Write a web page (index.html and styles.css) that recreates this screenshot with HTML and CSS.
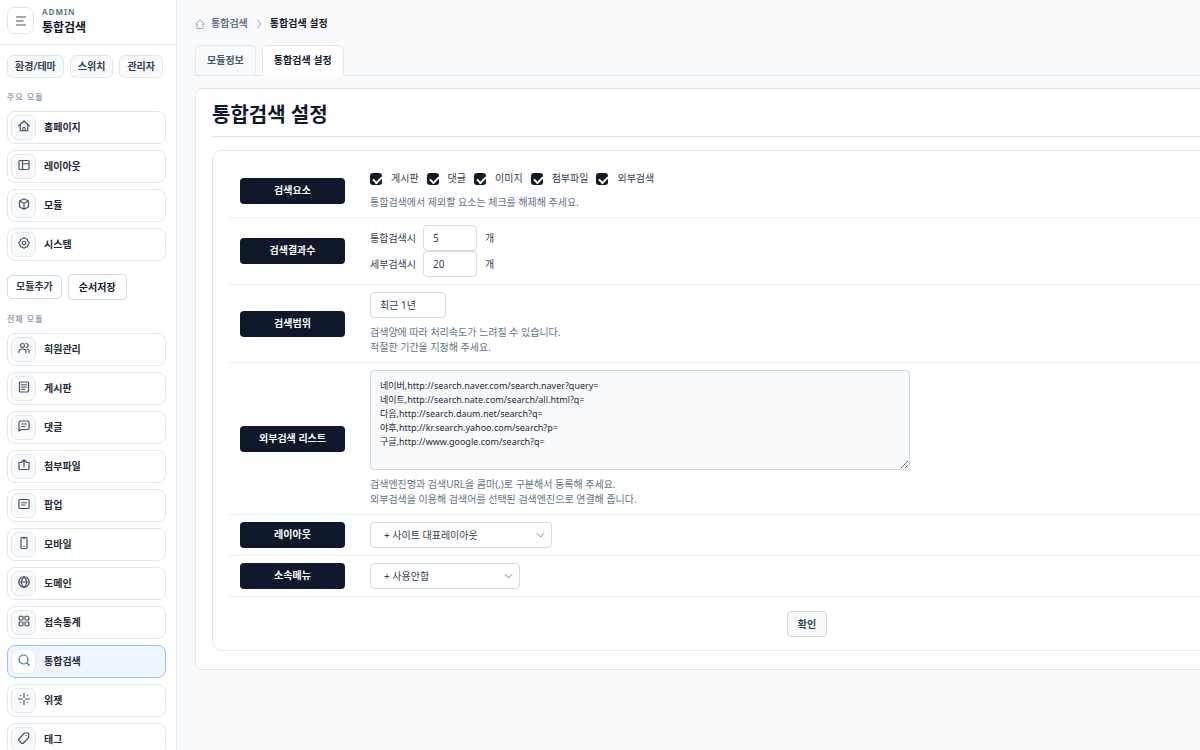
FILE: index.html
```html
<!-- index.html -->
<!DOCTYPE html>
<html lang="ko">

<head>
    <meta charset="UTF-8">
    <meta name="viewport" content="width=device-width, initial-scale=1.0">
    <title>통합검색 설정</title>
    <link rel="stylesheet" href="styles.css">
</head>

<body>
    <aside class="sidebar">
        <div class="sidebar-header">
            <button type="button" class="menu-toggle" aria-label="메뉴">
                <svg class="icon" viewBox="0 0 24 24"><path d="M3 4h18M3 12h13M3 20h18" /></svg>
            </button>
            <div>
                <div class="brand-sub">ADMIN</div>
                <div class="brand-title">통합검색</div>
            </div>
        </div>

        <div class="quick-links">
            <a href="#">환경/테마</a>
            <a href="#">스위치</a>
            <a href="#">관리자</a>
        </div>

        <h2 class="menu-label">주요 모듈</h2>
        <nav class="menu">
            <a href="#" class="menu-item">
                <span class="menu-icon"><svg class="icon" viewBox="0 0 24 24"><path d="M1.500 11.500L12 2l10.500 9.500M4.500 9v12.500h15V9M9.500 21.500V17a2.500 2.500 0 0 1 5 0v4.500" /></svg></span>
                홈페이지
            </a>
            <a href="#" class="menu-item">
                <span class="menu-icon"><svg class="icon" viewBox="0 0 24 24"><rect x="2" y="3" width="20" height="18" rx="2" /><path d="M9 3v18M9 9.500h13" /></svg></span>
                레이아웃
            </a>
            <a href="#" class="menu-item">
                <span class="menu-icon"><svg class="icon" viewBox="0 0 24 24"><path d="M12 1.500l9 4.500v12l-9 4.500L3 18V6zM3 6l9 4.500L21 6M12 10.500v12" /></svg></span>
                모듈
            </a>
            <a href="#" class="menu-item">
                <span class="menu-icon"><svg class="icon" viewBox="0 0 24 24"><circle cx="12" cy="12" r="3.500" /><path d="M9 3.500l3-2 3 2 3.500.5 1 3.500 3 4.500-3 4.500-1 3.500-3.500.5-3 2-3-2-3.500-.5-1-3.500-3-4.500 3-4.500 1-3.500z" /></svg></span>
                시스템
            </a>
        </nav>

        <div class="menu-actions">
            <a href="#" class="btn-add">모듈추가</a>
            <button type="button" class="btn-order">순서저장</button>
        </div>

        <h2 class="menu-label">전체 모듈</h2>
        <nav class="menu">
            <a href="#" class="menu-item">
                <span class="menu-icon"><svg class="icon" viewBox="0 0 24 24"><circle cx="9" cy="7" r="4" /><path d="M2 21v-2a5 5 0 0 1 5-5h4a5 5 0 0 1 5 5v2M16 3a4 4 0 0 1 0 8M18.500 14a5 5 0 0 1 4 5v2" /></svg></span>
                회원관리
            </a>
            <a href="#" class="menu-item">
                <span class="menu-icon"><svg class="icon" viewBox="0 0 24 24"><rect x="3" y="2" width="18" height="20" rx="2" /><path d="M7 7.500h10M7 12h10M7 16.500h7" /></svg></span>
                게시판
            </a>
            <a href="#" class="menu-item">
                <span class="menu-icon"><svg class="icon" viewBox="0 0 24 24"><path d="M2 22V5a3 3 0 0 1 3-3h15a2 2 0 0 1 2 2v12a3 3 0 0 1-3 3H6zM7 8h10M7 13h7" /></svg></span>
                댓글
            </a>
            <a href="#" class="menu-item">
                <span class="menu-icon"><svg class="icon" viewBox="0 0 24 24"><path d="M7 7H2v12a2 2 0 0 0 2 2h16a2 2 0 0 0 2-2V7h-5M12 16V2M7.500 6L12 1.500 16.500 6" /></svg></span>
                첨부파일
            </a>
            <a href="#" class="menu-item">
                <span class="menu-icon"><svg class="icon" viewBox="0 0 24 24"><rect x="2" y="3" width="20" height="18" rx="2" /><path d="M7 9.500h10M7 14h7" /></svg></span>
                팝업
            </a>
            <a href="#" class="menu-item">
                <span class="menu-icon"><svg class="icon" viewBox="0 0 24 24"><rect x="6" y="1" width="12" height="22" rx="2" /><path d="M10.500 3.500h3M11.500 19h1" /></svg></span>
                모바일
            </a>
            <a href="#" class="menu-item">
                <span class="menu-icon"><svg class="icon" viewBox="0 0 24 24"><circle cx="12" cy="12" r="10.500" /><path d="M1.500 12h21M12 1.500c7 6 7 15 0 21M12 1.500c-7 6-7 15 0 21" /></svg></span>
                도메인
            </a>
            <a href="#" class="menu-item">
                <span class="menu-icon"><svg class="icon" viewBox="0 0 24 24"><rect x="2.500" y="2.500" width="7.500" height="7.500" rx="1" /><rect x="14" y="2.500" width="7.500" height="7.500" rx="1" /><rect x="2.500" y="14" width="7.500" height="7.500" rx="1" /><rect x="14" y="14" width="7.500" height="7.500" rx="1" /></svg></span>
                접속통계
            </a>
            <a href="#" class="menu-item active">
                <span class="menu-icon"><svg class="icon" viewBox="0 0 24 24"><circle cx="11" cy="11" r="9" /><path d="M17.500 17.500l5 5" /></svg></span>
                통합검색
            </a>
            <a href="#" class="menu-item">
                <span class="menu-icon"><svg class="icon" viewBox="0 0 24 24"><path d="M12 0v9M12 15v9M0 12h9M15 12h9M5 5h.5M18.500 5h.5M5 19h.5M18.500 19h.5" /></svg></span>
                위젯
            </a>
            <a href="#" class="menu-item">
                <span class="menu-icon"><svg class="icon" viewBox="0 0 24 24"><path d="M13 2h6.500a2 2 0 0 1 2 2v7L10.500 22.500a2 2 0 0 1-3 0L2 17a2 2 0 0 1 0-3zM16.500 7h.5" /></svg></span>
                태그
            </a>
        </nav>
    </aside>

    <main class="main">
        <div class="breadcrumb">
            <svg class="icon" viewBox="0 0 24 24"><path d="M5 22V12H1.500L12 2l10.500 10H19v10z" /></svg>
            <a href="#">통합검색</a>
            <svg class="icon" viewBox="0 0 24 24"><path d="M8 3l9 9-9 9" /></svg>
            <strong>통합검색 설정</strong>
        </div>

        <nav class="tabs">
            <a href="#">모듈정보</a>
            <a href="#" class="on">통합검색 설정</a>
        </nav>

        <section class="panel">
            <h1>통합검색 설정</h1>

            <form class="config">
                <table>
                    <tr>
                        <th scope="row"><span class="tag">검색요소</span></th>
                        <td>
                            <div class="checks">
                                <label><input type="checkbox" checked>게시판</label>
                                <label><input type="checkbox" checked>댓글</label>
                                <label><input type="checkbox" checked>이미지</label>
                                <label><input type="checkbox" checked>첨부파일</label>
                                <label><input type="checkbox" checked>외부검색</label>
                            </div>
                            <p class="help">통합검색에서 제외할 요소는 체크를 해제해 주세요.</p>
                        </td>
                    </tr>
                    <tr>
                        <th scope="row"><span class="tag">검색결과수</span></th>
                        <td>
                            <div class="count">
                                <label for="num-all">통합검색시</label>
                                <input type="text" id="num-all" value="5">개
                            </div>
                            <div class="count">
                                <label for="num-detail">세부검색시</label>
                                <input type="text" id="num-detail" value="20">개
                            </div>
                        </td>
                    </tr>
                    <tr>
                        <th scope="row"><label class="tag" for="term">검색범위</label></th>
                        <td>
                            <select id="term" class="term">
                                <option>최근 1년</option>
                            </select>
                            <p class="help">검색양에 따라 처리속도가 느려질 수 있습니다.<br>적절한 기간을 지정해 주세요.</p>
                        </td>
                    </tr>
                    <tr>
                        <th scope="row"><label class="tag" for="engines">외부검색 리스트</label></th>
                        <td>
                            <textarea id="engines" spellcheck="false">네이버,http://search.naver.com/search.naver?query=
네이트,http://search.nate.com/search/all.html?q=
다음,http://search.daum.net/search?q=
야후,http://kr.search.yahoo.com/search?p=
구글,http://www.google.com/search?q=</textarea>
                            <p class="help">검색엔진명과 검색URL을 콤마(,)로 구분해서 등록해 주세요.<br>외부검색을 이용해 검색어를 선택된 검색엔진으로 연결해 줍니다.</p>
                        </td>
                    </tr>
                    <tr>
                        <th scope="row"><label class="tag" for="layout">레이아웃</label></th>
                        <td>
                            <div class="select-box layout">
                                <select id="layout">
                                    <option>+ 사이트 대표레이아웃</option>
                                </select>
                                <svg class="icon" viewBox="0 0 24 24"><path d="M3 8l9 9 9-9" /></svg>
                            </div>
                        </td>
                    </tr>
                    <tr>
                        <th scope="row"><label class="tag" for="menu">소속메뉴</label></th>
                        <td>
                            <div class="select-box">
                                <select id="menu">
                                    <option>+ 사용안함</option>
                                </select>
                                <svg class="icon" viewBox="0 0 24 24"><path d="M3 8l9 9 9-9" /></svg>
                            </div>
                        </td>
                    </tr>
                </table>

                <div class="submit">
                    <button type="submit">확인</button>
                </div>
            </form>
        </section>
    </main>
</body>

</html>
```
FILE: styles.css
```css
* {
    box-sizing: border-box;
}

body {
    margin: 0;
    height: 100vh;
    display: flex;
    overflow: hidden;
    background-color: #f8fafc;
    color: #334155;
    font-family: "Noto Sans", "Noto Sans CJK KR", sans-serif;
    font-size: 10px;
    line-height: 15px;
}

a {
    color: inherit;
    text-decoration: none;
}

button,
input,
select,
textarea {
    font: inherit;
    color: inherit;
}

.icon {
    display: block;
    width: 12px;
    height: 12px;
    fill: none;
    stroke: currentColor;
    stroke-width: 2.4;
    stroke-linecap: round;
    stroke-linejoin: round;
}

/* sidebar */
.sidebar {
    flex: none;
    width: 177px;
    height: 100vh;
    overflow-y: auto;
    scrollbar-width: none;
    background-color: white;
    border-right: 1px solid #e2e8f0;
}

.sidebar-header {
    display: flex;
    align-items: center;
    gap: 8px;
    height: 45px;
    padding: 0 7px 3px;
    border-bottom: 1px solid #e2e8f0;
}

.menu-toggle {
    display: flex;
    align-items: center;
    justify-content: center;
    width: 27px;
    height: 27px;
    padding: 0;
    background-color: white;
    border: 1px solid #e2e8f0;
    border-radius: 7px;
    color: #475569;
}

.brand-sub {
    font-size: 8px;
    line-height: 14px;
    font-weight: 700;
    letter-spacing: 1px;
    color: #64748b;
}

.brand-title {
    font-size: 12px;
    line-height: 17px;
    font-weight: 700;
    color: #0f172a;
}

.quick-links {
    display: flex;
    gap: 6px;
    padding: 10px 7px 0;
}

.quick-links a {
    padding: 3px 7px;
    background-color: #f8fafc;
    border: 1px solid #e2e8f0;
    border-radius: 6px;
    font-weight: 600;
}

.menu-label {
    margin: 12px 7px 7px;
    font-size: 8px;
    line-height: 14px;
    font-weight: 600;
    letter-spacing: 1px;
    color: #94a3b8;
}

.menu {
    display: flex;
    flex-direction: column;
    gap: 6px;
    padding: 0 10px 0 7px;
}

.menu-item {
    display: flex;
    align-items: center;
    gap: 8px;
    height: 33px;
    padding: 0 3px;
    border: 1px solid #e2e8f0;
    border-radius: 8px;
    font-weight: 700;
    color: #1e293b;
}

.menu-icon {
    display: flex;
    justify-content: center;
    width: 25px;
    height: 25px;
    padding-top: 4px;
    background-color: #f8fafc;
    border: 1px solid #e2e8f0;
    border-radius: 7px;
    color: #475569;
}

.menu-item.active {
    background-color: #eff6ff;
    border-color: #93c5fd;
}

.menu-item.active .menu-icon {
    background-color: white;
    border-color: #dbeafe;
    color: #3b6fe0;
}

.menu-actions {
    display: flex;
    align-items: center;
    gap: 6px;
    padding: 13px 7px 0;
}

.btn-add,
.btn-order {
    height: 24px;
    padding: 3px 8px;
    background-color: white;
    border: 1px solid #d3dbe5;
    border-radius: 5px;
    font-weight: 600;
}

.btn-order {
    height: 26px;
    padding: 0 10px;
    border-radius: 4px;
    color: #0f172a;
}

/* content */
.main {
    flex: 1;
    min-width: 0;
    overflow: hidden;
    padding: 16px 18px;
}

.breadcrumb {
    display: flex;
    align-items: center;
    gap: 6px;
    font-weight: 600;
    color: #64748b;
}

.breadcrumb .icon {
    width: 10px;
    height: 10px;
    color: #94a3b8;
}

.breadcrumb strong {
    font-weight: 600;
    color: #0f172a;
}

.tabs {
    display: flex;
    gap: 6px;
    min-width: 1224px;
    margin: 14px 0 12px;
    border-bottom: 1px solid #e2e8f0;
}

.tabs a {
    padding: 7px 11px;
    margin-bottom: -1px;
    border: 1px solid #e2e8f0;
    border-radius: 6px 6px 0 0;
    font-weight: 600;
    color: #475569;
}

.tabs .on {
    background-color: white;
    border-bottom-color: white;
    color: #0f172a;
}

.panel {
    min-width: 1224px;
    padding: 12px 16px 18px;
    background-color: white;
    border: 1px solid #e2e8f0;
    border-radius: 7px;
}

h1 {
    margin: 0 0 13px;
    padding-bottom: 8px;
    border-bottom: 1px solid #e2e8f0;
    font-size: 20px;
    line-height: 27px;
    font-weight: 700;
    color: #0f172a;
}

.config {
    padding: 13px 15px;
    border: 1px solid #e2e8f0;
    border-radius: 10px;
}

table {
    width: 100%;
    border-collapse: collapse;
}

th,
td {
    padding: 7px 0;
    border-bottom: 1px solid #eef1f5;
    text-align: left;
    vertical-align: middle;
}

th {
    width: 142px;
    padding-left: 12px;
}

.tag {
    display: block;
    width: 105px;
    padding: 5px 0 6px;
    background-color: #0f172a;
    border-radius: 4px;
    text-align: center;
    font-weight: 700;
    color: white;
}

.checks {
    display: flex;
    gap: 8px;
    margin-bottom: 9px;
}

.checks label {
    display: flex;
    align-items: center;
    gap: 9px;
}

.checks input {
    position: relative;
    appearance: none;
    width: 12px;
    height: 12px;
    margin: 0;
    background-color: #0f172a;
    border-radius: 3px;
}

.checks input:checked::after {
    content: "";
    position: absolute;
    left: 3px;
    top: 3px;
    width: 7px;
    height: 4px;
    border: solid white;
    border-width: 0 0 2px 2px;
    transform: rotate(-45deg);
}

.help {
    margin: 7px 0 0;
    color: #64748b;
}

.count {
    display: flex;
    align-items: center;
    gap: 8px;
}

.count label {
    width: 45px;
    white-space: nowrap;
}

.count input,
select {
    display: block;
    width: 54px;
    height: 26px;
    padding: 0 9px;
    appearance: none;
    background-color: white;
    border: 1px solid #d3dbe5;
    border-radius: 4px;
}

.term {
    width: 76px;
}

textarea {
    display: block;
    width: 540px;
    height: 100px;
    padding: 8px 9px;
    background-color: #f8fafc;
    border: 1px solid #d3dbe5;
    border-radius: 4px;
    font-size: 9px;
    line-height: 14px;
    color: #1e293b;
}

.select-box {
    position: relative;
    width: 150px;
}

.select-box.layout {
    width: 182px;
}

.select-box select {
    width: 100%;
    padding: 0 13px;
}

.select-box .icon {
    position: absolute;
    right: 7px;
    top: 7px;
    width: 9px;
    color: #64748b;
    pointer-events: none;
}

.submit {
    margin-top: 14px;
    text-align: center;
}

.submit button {
    height: 26px;
    padding: 0 10px;
    background-color: #f8fafc;
    border: 1px solid #d3dbe5;
    border-radius: 4px;
    font-weight: 600;
}
```
